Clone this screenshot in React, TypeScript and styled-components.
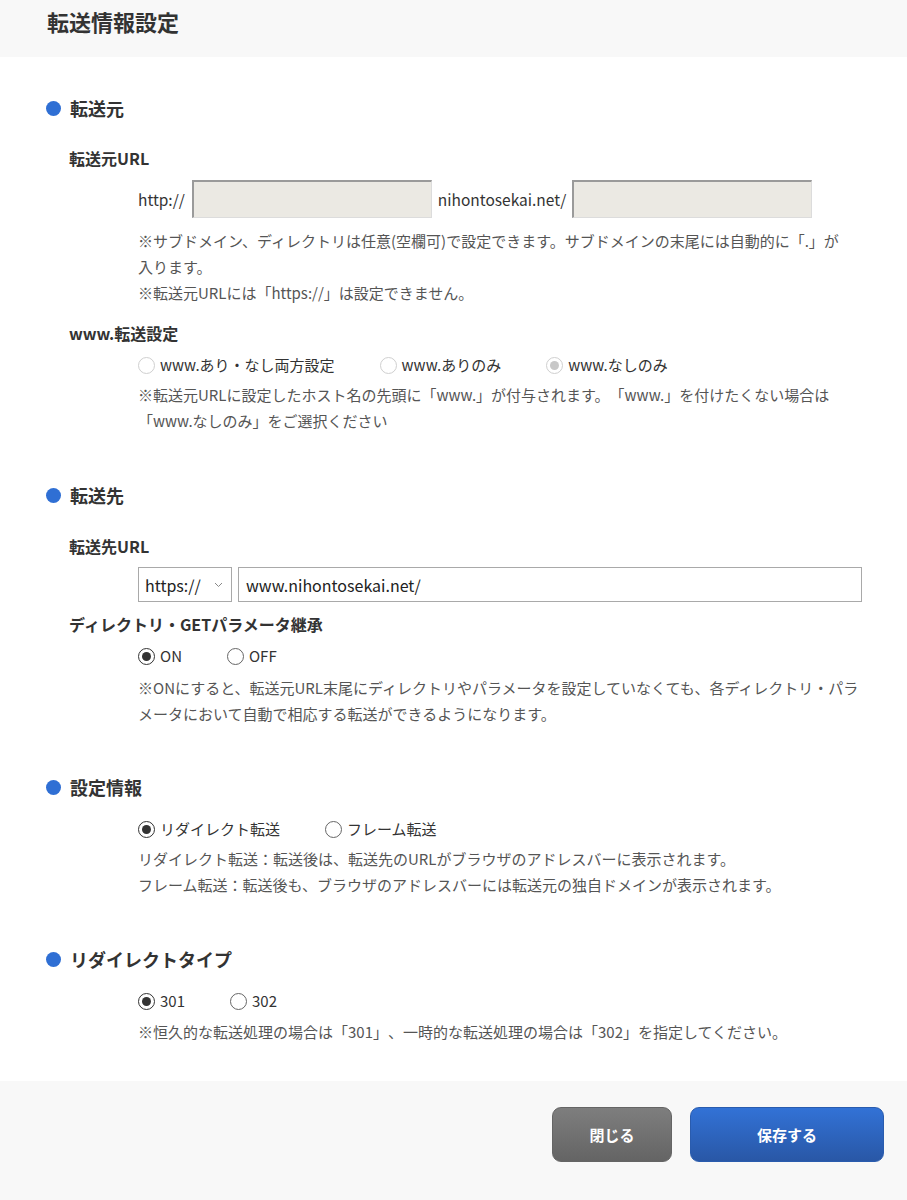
import React from "react";
import styled, { createGlobalStyle } from "styled-components";

const GlobalStyle = createGlobalStyle`
  html, body {
    margin: 0;
    padding: 0;
    background: #ffffff;
  }
  body {
    font-family: "Noto Sans CJK JP", "Noto Sans", sans-serif;
    color: #333333;
    font-size: 15px;
    text-spacing-trim: space-all;
    -webkit-font-smoothing: antialiased;
  }
  * { box-sizing: border-box; }
`;

const Page = styled.div`
  width: 907px;
  min-height: 1200px;
  display: flex;
  flex-direction: column;
  background: #ffffff;
`;

const Header = styled.header`
  height: 57px;
  background: #f8f8f8;
  padding: 8px 0 0 47px;
`;

const Title = styled.h1`
  margin: 0;
  font-size: 22px;
  line-height: 26px;
  font-weight: 700;
  color: #333333;
`;

const Main = styled.main`
  padding: 36px 0 36px 0;
`;

const Section = styled.section<{ $gap: number }>`
  margin-top: ${(p) => p.$gap}px;
  &:first-child { margin-top: 0; }
`;

const SectionHeading = styled.h2`
  margin: 0;
  display: flex;
  align-items: center;
  gap: 9px;
  padding-left: 46px;
  font-size: 18px;
  line-height: 30px;
  font-weight: 700;
  color: #333333;
`;

const Dot = styled.span`
  width: 15px;
  height: 15px;
  border-radius: 50%;
  background: #2f6fd4;
  flex: none;
`;

const FieldLabel = styled.h3<{ $mt: number }>`
  margin: ${(p) => p.$mt}px 0 0 0;
  padding-left: 69px;
  font-size: 16px;
  line-height: 26px;
  font-weight: 700;
  color: #333333;
`;

const Body = styled.div<{ $mt: number }>`
  margin-top: ${(p) => p.$mt}px;
  padding-left: 138px;
  padding-right: 40px;
`;

const UrlRow = styled.div`
  display: flex;
  align-items: center;
  height: 38px;
`;

const Prefix = styled.span`
  font-size: 15.5px;
  color: #333333;
  margin-right: 7px;
`;

const Domain = styled.span`
  font-size: 15.5px;
  color: #333333;
  margin: 0 6px;
`;

const DisabledInput = styled.input`
  width: 240px;
  height: 38px;
  background: #ebe9e3;
  border-top: 2px solid #9a9a9a;
  border-left: 2px solid #9a9a9a;
  border-right: 1px solid #dcdcdc;
  border-bottom: 1px solid #dcdcdc;
  padding: 0 6px;
  font: inherit;
  outline: none;
`;

const Note = styled.p<{ $mt: number }>`
  margin: ${(p) => p.$mt}px 0 0 0;
  font-size: 15px;
  line-height: 26px;
  color: #555555;
  white-space: nowrap;
`;

const RadioRow = styled.div<{ $mt: number }>`
  margin-top: ${(p) => p.$mt}px;
  display: flex;
  align-items: center;
  gap: 45px;
  height: 26px;
`;

const RadioItem = styled.label`
  display: flex;
  align-items: center;
  gap: 5px;
  font-size: 15px;
  line-height: 26px;
  color: #333333;
`;

const RadioCircle = styled.span<{ $checked?: boolean; $disabled?: boolean }>`
  width: 17px;
  height: 17px;
  border-radius: 50%;
  border: 1px solid ${(p) => (p.$disabled ? "#cfcfcf" : p.$checked ? "#333333" : "#666666")};
  background: #ffffff;
  display: flex;
  align-items: center;
  justify-content: center;
  flex: none;
  &::after {
    content: "";
    width: 9px;
    height: 9px;
    border-radius: 50%;
    background: ${(p) => (p.$disabled ? "#c8c8c8" : "#333333")};
    display: ${(p) => (p.$checked ? "block" : "none")};
  }
`;

const DestRow = styled.div`
  display: flex;
  align-items: center;
  gap: 6px;
  height: 35px;
`;

const SelectBox = styled.div`
  width: 94px;
  height: 35px;
  border: 1px solid #a9a9a9;
  display: flex;
  align-items: center;
  justify-content: space-between;
  padding: 0 8px 0 6px;
  font-size: 16px;
  color: #222222;
  background: #ffffff;
`;

const TextInput = styled.div`
  width: 624px;
  height: 35px;
  border: 1px solid #a9a9a9;
  display: flex;
  align-items: center;
  padding: 0 7px;
  font-size: 16px;
  color: #222222;
`;

const Footer = styled.footer`
  flex: 1;
  background: #f8f8f8;
  display: flex;
  justify-content: flex-end;
  align-items: flex-start;
  gap: 18px;
  padding: 26px 23px 0 0;
`;

const Button = styled.button<{ $primary?: boolean }>`
  width: ${(p) => (p.$primary ? 194 : 120)}px;
  height: 55px;
  border-radius: 9px;
  border: 1px solid ${(p) => (p.$primary ? "#2a5cae" : "#656565")};
  background: ${(p) =>
    p.$primary
      ? "linear-gradient(to bottom, #3272d6, #2957a6)"
      : "linear-gradient(to bottom, #7e7e7e, #646464)"};
  color: #ffffff;
  font-family: inherit;
  font-size: 15px;
  font-weight: 700;
  cursor: pointer;
`;

const Chevron = () => (
  <svg width="9" height="6" viewBox="0 0 9 6" fill="none">
    <path d="M1 1l3.5 3.5L8 1" stroke="#888" strokeWidth="1" />
  </svg>
);

type RadioProps = { label: string; checked?: boolean; disabled?: boolean };
const Radio = ({ label, checked, disabled }: RadioProps) => (
  <RadioItem>
    <RadioCircle $checked={checked} $disabled={disabled} />
    {label}
  </RadioItem>
);

export default function App() {
  return (
    <>
      <GlobalStyle />
      <Page>
        <Header>
          <Title>転送情報設定</Title>
        </Header>
        <Main>
          <Section $gap={0}>
            <SectionHeading>
              <Dot />
              転送元
            </SectionHeading>
            <FieldLabel $mt={22}>転送元URL</FieldLabel>
            <Body $mt={9}>
              <UrlRow>
                <Prefix>http://</Prefix>
                <DisabledInput disabled />
                <Domain>nihontosekai.net/</Domain>
                <DisabledInput disabled />
              </UrlRow>
              <Note $mt={10}>
                ※サブドメイン、ディレクトリは任意(空欄可)で設定できます。サブドメインの末尾には自動的に「.」が
                <br />
                入ります。
                <br />
                ※転送元URLには「https://」は設定できません。
              </Note>
            </Body>
            <FieldLabel $mt={14}>www.転送設定</FieldLabel>
            <Body $mt={6}>
              <RadioRow $mt={0}>
                <Radio label="www.あり・なし両方設定" disabled />
                <Radio label="www.ありのみ" disabled />
                <Radio label="www.なしのみ" checked disabled />
              </RadioRow>
              <Note $mt={4}>
                ※転送元URLに設定したホスト名の先頭に「www.」が付与されます。「www.」を付けたくない場合は
                <br />
                「www.なしのみ」をご選択ください
              </Note>
            </Body>
          </Section>

          <Section $gap={46}>
            <SectionHeading>
              <Dot />
              転送先
            </SectionHeading>
            <FieldLabel $mt={23}>転送先URL</FieldLabel>
            <Body $mt={8}>
              <DestRow>
                <SelectBox>
                  https://
                  <Chevron />
                </SelectBox>
                <TextInput>www.nihontosekai.net/</TextInput>
              </DestRow>
            </Body>
            <FieldLabel $mt={9}>ディレクトリ・GETパラメータ継承</FieldLabel>
            <Body $mt={6}>
              <RadioRow $mt={0}>
                <Radio label="ON" checked />
                <Radio label="OFF" />
              </RadioRow>
              <Note $mt={6}>
                ※ONにすると、転送元URL末尾にディレクトリやパラメータを設定していなくても、各ディレクトリ・パラ
                <br />
                メータにおいて自動で相応する転送ができるようになります。
              </Note>
            </Body>
          </Section>

          <Section $gap={45}>
            <SectionHeading>
              <Dot />
              設定情報
            </SectionHeading>
            <Body $mt={14}>
              <RadioRow $mt={0}>
                <Radio label="リダイレクト転送" checked />
                <Radio label="フレーム転送" />
              </RadioRow>
              <Note $mt={4}>
                リダイレクト転送：転送後は、転送先のURLがブラウザのアドレスバーに表示されます。
                <br />
                フレーム転送：転送後も、ブラウザのアドレスバーには転送元の独自ドメインが表示されます。
              </Note>
            </Body>
          </Section>

          <Section $gap={46}>
            <SectionHeading>
              <Dot />
              リダイレクトタイプ
            </SectionHeading>
            <Body $mt={14}>
              <RadioRow $mt={0}>
                <Radio label="301" checked />
                <Radio label="302" />
              </RadioRow>
              <Note $mt={5}>
                ※恒久的な転送処理の場合は「301」、一時的な転送処理の場合は「302」を指定してください。
              </Note>
            </Body>
          </Section>
        </Main>
        <Footer>
          <Button type="button">閉じる</Button>
          <Button type="button" $primary>
            保存する
          </Button>
        </Footer>
      </Page>
    </>
  );
}
